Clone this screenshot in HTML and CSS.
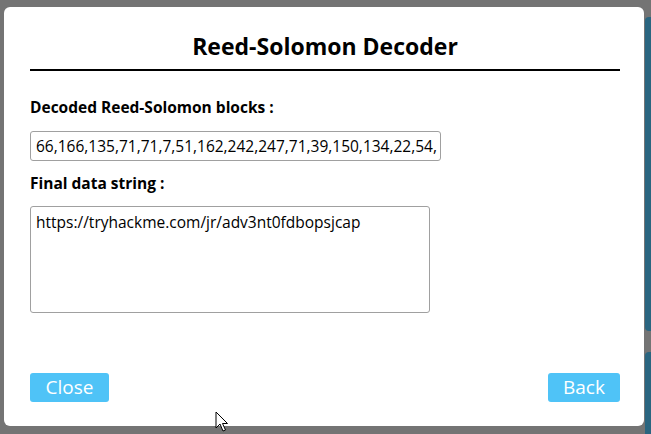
FILE: index.html
```html
<!DOCTYPE html>
<html>
<head>
<meta charset="utf-8">
<link rel="stylesheet" href="styles.css">
</head>
<body>
<div class="stage">
  <div class="modal">
    <h1 class="title">Reed-Solomon Decoder</h1>
    <div class="rule"></div>
    <label class="label first">Decoded Reed-Solomon blocks :</label>
    <div class="input">66,166,135,71,71,7,51,162,242,247,71,39,150,134,22,54,</div>
    <label class="label second">Final data string :</label>
    <div class="textarea">https://tryhackme.com/jr/adv3nt0fdbopsjcap</div>
    <div class="actions">
      <button class="btn btn-close">Close</button>
      <button class="btn btn-back">Back</button>
    </div>
  </div>
  <div class="side">
    <div class="side-block top"></div>
    <div class="side-block bottom"></div>
  </div>
</div>
<svg class="cursor" width="14" height="22" viewBox="0 0 14 22">
  <path d="M1 1 L1 17 L5 13 L8 20 L10.5 19 L7.5 12.5 L12.5 12.5 Z" fill="#fff" stroke="#000" stroke-width="1" stroke-linejoin="round"/>
</svg>
</body>
</html>
```

FILE: styles.css
```css
html, body {
  margin: 0;
  padding: 0;
}
body {
  background: #747474;
  width: 651px;
  height: 434px;
  overflow: hidden;
  position: relative;
  font-family: "Open Sans", "Noto Sans", sans-serif;
}
.stage {
  display: flex;
  padding: 7px 0 0 4px;
  gap: 1px;
}
.modal {
  width: 641px;
  height: 419px;
  box-sizing: border-box;
  background: #fff;
  border-radius: 6px;
  padding: 0 24px 0 26px;
  display: flex;
  flex-direction: column;
  align-items: flex-start;
}
.title {
  align-self: stretch;
  margin: 0;
  padding-top: 24px;
  height: 38px;
  text-align: center;
  font-size: 23px;
  line-height: 30px;
  font-weight: 700;
  color: #000;
}
.rule {
  align-self: stretch;
  height: 2px;
  background: #000;
}
.label {
  font-size: 15.5px;
  font-weight: 700;
  color: #000;
  line-height: 20px;
}
.label.first {
  margin-top: 26px;
}
.input {
  margin-top: 14px;
  width: 411px;
  height: 30px;
  box-sizing: border-box;
  border: 1px solid #a0a0a0;
  border-radius: 3px;
  padding: 0 5px;
  font-size: 15.5px;
  line-height: 28px;
  white-space: nowrap;
  overflow: hidden;
  color: #000;
}
.label.second {
  margin-top: 12px;
}
.textarea {
  margin-top: 13px;
  width: 400px;
  height: 107px;
  box-sizing: border-box;
  border: 1px solid #a0a0a0;
  border-radius: 3px;
  padding: 4px 5px;
  font-size: 15.5px;
  line-height: 22px;
  color: #000;
}
.actions {
  margin-top: 60px;
  align-self: stretch;
  display: flex;
  justify-content: space-between;
}
.btn {
  border: none;
  border-radius: 3px;
  background: #4fc3f7;
  color: #fff;
  font-family: "Open Sans", "Noto Sans", sans-serif;
  font-size: 19px;
  line-height: 29px;
  height: 29px;
  padding: 0;
  text-align: center;
}
.btn-close {
  width: 79px;
}
.btn-back {
  width: 72px;
}
.side {
  display: flex;
  flex-direction: column;
  gap: 21px;
  padding-top: 10px;
}
.side-block {
  width: 6px;
  background: #2a6580;
  border-radius: 4px 0 0 4px;
}
.side-block.top {
  height: 314px;
}
.side-block.bottom {
  height: 100px;
}
.cursor {
  position: absolute;
  left: 215px;
  top: 411px;
}
```
